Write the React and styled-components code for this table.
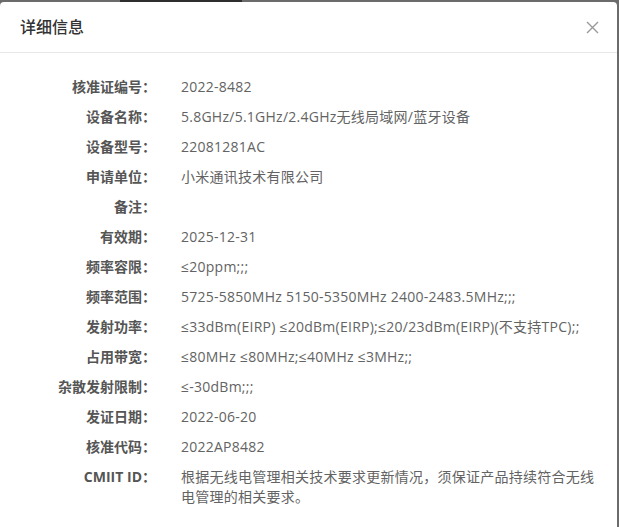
import styled, { createGlobalStyle } from 'styled-components'

const GlobalStyle = createGlobalStyle`
  html, body {
    margin: 0;
    padding: 0;
    background: #6b6b6b;
  }
  body {
    font-family: "Open Sans", "Noto Sans CJK SC", sans-serif;
    overflow: hidden;
  }
`

const Backdrop = styled.div`
  display: flex;
  height: 2px;
`

const PeekText = styled.div`
  margin-left: 120px;
  width: 122px;
  background: #2e2e2e;
`

const Modal = styled.div`
  width: 617px;
  min-height: 525px;
  background: #fff;
  border-radius: 4px 4px 0 0;
`

const Header = styled.div`
  display: flex;
  align-items: center;
  justify-content: space-between;
  height: 50px;
  padding: 0 17px 0 20px;
  border-bottom: 1px solid #e8e8e8;
`

const Title = styled.h2`
  margin: 0;
  font-size: 16px;
  font-weight: 500;
  color: #333;
  line-height: 22px;
`

const CloseButton = styled.button`
  display: flex;
  align-items: center;
  justify-content: center;
  width: 16px;
  height: 16px;
  padding: 0;
  border: none;
  background: none;
  cursor: pointer;
`

const Body = styled.div`
  padding: 24px 20px 10px;
`

const Row = styled.div`
  display: flex;
  gap: 25px;
  margin-bottom: 10px;
  font-size: 14px;
  line-height: 20px;
`

const Label = styled.div`
  flex: 0 0 136px;
  text-align: right;
  font-weight: 700;
  color: #555;
`

const Value = styled.div`
  flex: 1;
  color: #636363;
  letter-spacing: 0.25px;
`

const rows = [
  ['核准证编号', '2022-8482'],
  ['设备名称', '5.8GHz/5.1GHz/2.4GHz无线局域网/蓝牙设备'],
  ['设备型号', '22081281AC'],
  ['申请单位', '小米通讯技术有限公司'],
  ['备注', ''],
  ['有效期', '2025-12-31'],
  ['频率容限', '≤20ppm;;;'],
  ['频率范围', '5725-5850MHz 5150-5350MHz 2400-2483.5MHz;;;'],
  ['发射功率', '≤33dBm(EIRP) ≤20dBm(EIRP);≤20/23dBm(EIRP)(不支持TPC);;'],
  ['占用带宽', '≤80MHz ≤80MHz;≤40MHz ≤3MHz;;'],
  ['杂散发射限制', '≤-30dBm;;;'],
  ['发证日期', '2022-06-20'],
  ['核准代码', '2022AP8482'],
  ['CMIIT ID', '根据无线电管理相关技术要求更新情况，须保证产品持续符合无线电管理的相关要求。'],
]

const CloseIcon = () => (
  <svg width="13" height="13" viewBox="0 0 13 13">
    <path d="M1 1 L12 12 M12 1 L1 12" stroke="#999" strokeWidth="1.4" fill="none" />
  </svg>
)

const App = () => (
  <>
    <GlobalStyle />
    <Backdrop>
      <PeekText />
    </Backdrop>
    <Modal>
      <Header>
        <Title>详细信息</Title>
        <CloseButton aria-label="关闭">
          <CloseIcon />
        </CloseButton>
      </Header>
      <Body>
        {rows.map(([label, value]) => (
          <Row key={label}>
            <Label>{label}：</Label>
            <Value>{value}</Value>
          </Row>
        ))}
      </Body>
    </Modal>
  </>
)

export default App
